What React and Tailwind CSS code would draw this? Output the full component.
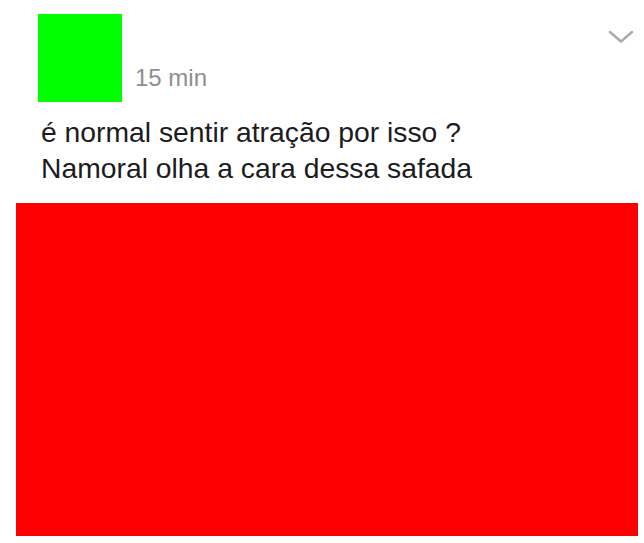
const Chevron = () => (
  <svg width="26" height="14" viewBox="0 0 26 14" fill="none">
    <polyline
      points="2,2 13,11.5 24,2"
      stroke="#a9abb3"
      strokeWidth="2.5"
      strokeLinecap="round"
      strokeLinejoin="round"
    />
  </svg>
);

const App = () => {
  return (
    <div
      className="w-[644px] h-[543px] bg-white overflow-hidden"
      style={{ fontFamily: '"Liberation Sans", Arial, sans-serif' }}
    >
      {/* Post header */}
      <div className="flex items-start pt-[14px] pl-[38px] pr-[10px]">
        <div className="w-[84px] h-[88px] bg-[#00ff00] shrink-0" />
        <div className="self-end ml-[13px] mb-[12px] text-[24px] leading-[24px] text-[#8e8e93]">
          15 min
        </div>
        <div className="ml-auto mt-[16px]">
          <Chevron />
        </div>
      </div>

      {/* Post text */}
      <div className="pl-[41px] mt-[12px] text-[28.3px] leading-[36px] text-[#1c1c1e]">
        <p>é normal sentir atração por isso ?</p>
        <p>Namoral olha a cara dessa safada</p>
      </div>

      {/* Image */}
      <div className="ml-[16px] mt-[17px] w-[622px] h-[333px] bg-[#ff0000]" />
    </div>
  );
};

export default App;
